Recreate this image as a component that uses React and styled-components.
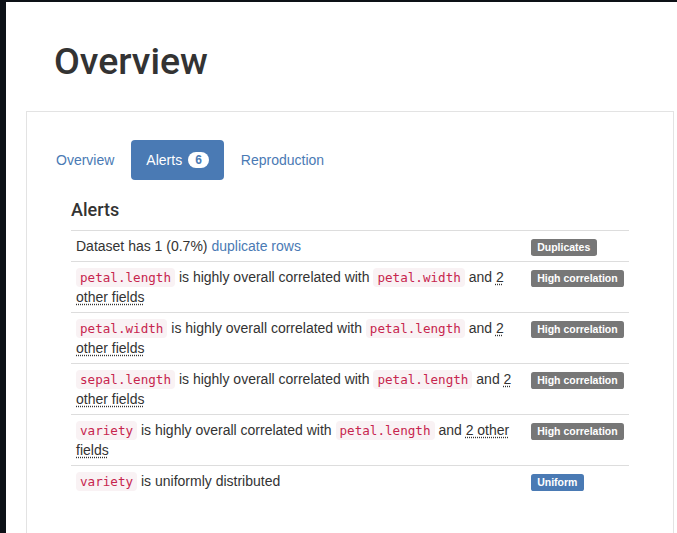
import React from "react";
import styled, { createGlobalStyle } from "styled-components";

const GlobalStyle = createGlobalStyle`
  html, body {
    margin: 0;
    padding: 0;
    background: #0d1117;
  }
  body {
    font-family: "Liberation Sans", Arial, sans-serif;
    font-size: 14px;
    line-height: 1.42857;
    color: #333;
  }
  * { box-sizing: border-box; }
`;

const BLUE = "#4a7ab4";

const Window = styled.div`
  margin: 2px 0 0 6px;
  background: #fff;
  min-height: calc(100vh - 2px);
  padding: 0 3px 0 20px;
  overflow: hidden;
`;

const Title = styled.h1`
  margin: 39px 0 29px 28px;
  font-family: Roboto, "Liberation Sans", sans-serif;
  font-size: 37.5px;
  font-weight: 500;
  line-height: 41px;
  color: #333;
`;

const Panel = styled.section`
  border: 1px solid #e3e3e3;
  padding: 28px 14px 40px;
  min-height: 460px;
`;

const Pills = styled.ul`
  display: flex;
  gap: 2px;
  list-style: none;
  margin: 0;
  padding: 0;
`;

const Pill = styled.a`
  display: flex;
  align-items: center;
  padding: 10px 15px;
  border-radius: 4px;
  line-height: 20px;
  text-decoration: none;
  cursor: pointer;
  color: ${(p) => (p.$active ? "#fff" : BLUE)};
  background: ${(p) => (p.$active ? BLUE : "transparent")};
`;

const CountBadge = styled.span`
  display: inline-block;
  margin-left: 6px;
  min-width: 10px;
  padding: 2px 7px;
  font-size: 12px;
  font-weight: 700;
  line-height: 1;
  color: ${BLUE};
  background: #fff;
  border-radius: 10px;
  text-align: center;
`;

const TabContent = styled.div`
  padding: 20px 30px 0;
`;

const SectionTitle = styled.h4`
  margin: 0 0 10px;
  font-family: Roboto, "Liberation Sans", sans-serif;
  font-size: 18px;
  font-weight: 500;
  line-height: 20px;
  color: #333;
`;

const Table = styled.table`
  width: 100%;
  border-collapse: collapse;
  border-spacing: 0;
`;

const Cell = styled.td`
  border-top: 1px solid #ddd;
  padding: 5px;
  vertical-align: top;
  line-height: 20px;
  white-space: ${(p) => (p.$nowrap ? "nowrap" : "normal")};
  width: ${(p) => (p.$nowrap ? "1%" : "auto")};
`;

const Code = styled.code`
  font-family: "DejaVu Sans Mono", "Liberation Mono", monospace;
  font-size: 90%;
  line-height: 1;
  padding: 2px 4px;
  color: #c7254e;
  background: #f9f2f4;
  border-radius: 4px;
`;

const Link = styled.a`
  color: ${BLUE};
  text-decoration: none;
`;

const Abbr = styled.abbr`
  text-decoration: underline dotted;
  text-underline-offset: 2px;
  cursor: help;
`;

const Label = styled.span`
  display: inline;
  padding: 0.2em 0.6em 0.3em;
  font-size: 75%;
  font-weight: 700;
  line-height: 1;
  color: #fff;
  background: ${(p) => p.$bg};
  border-radius: 0.25em;
  white-space: nowrap;
  vertical-align: baseline;
`;

const correlations = [
  { a: "petal.length", b: "petal.width" },
  { a: "petal.width", b: "petal.length" },
  { a: "sepal.length", b: "petal.length" },
  { a: "variety", b: "petal.length" },
];

export default function App() {
  return (
    <>
      <GlobalStyle />
      <Window>
        <Title>Overview</Title>
        <Panel>
          <Pills>
            <li>
              <Pill>Overview</Pill>
            </li>
            <li>
              <Pill $active>
                Alerts<CountBadge>6</CountBadge>
              </Pill>
            </li>
            <li>
              <Pill>Reproduction</Pill>
            </li>
          </Pills>
          <TabContent>
            <SectionTitle>Alerts</SectionTitle>
            <Table>
              <tbody>
                <tr>
                  <Cell>
                    Dataset has 1 (0.7%) <Link>duplicate rows</Link>
                  </Cell>
                  <Cell $nowrap>
                    <Label $bg="#777">Duplicates</Label>
                  </Cell>
                </tr>
                {correlations.map((c) => (
                  <tr key={c.a}>
                    <Cell>
                      <Code>{c.a}</Code> is highly overall correlated with{" "}
                      <Code>{c.b}</Code> and <Abbr title="petal.width, sepal.length">2 other fields</Abbr>
                    </Cell>
                    <Cell $nowrap>
                      <Label $bg="#777">High correlation</Label>
                    </Cell>
                  </tr>
                ))}
                <tr>
                  <Cell>
                    <Code>variety</Code> is uniformly distributed
                  </Cell>
                  <Cell $nowrap>
                    <Label $bg={BLUE}>Uniform</Label>
                  </Cell>
                </tr>
              </tbody>
            </Table>
          </TabContent>
        </Panel>
      </Window>
    </>
  );
}
